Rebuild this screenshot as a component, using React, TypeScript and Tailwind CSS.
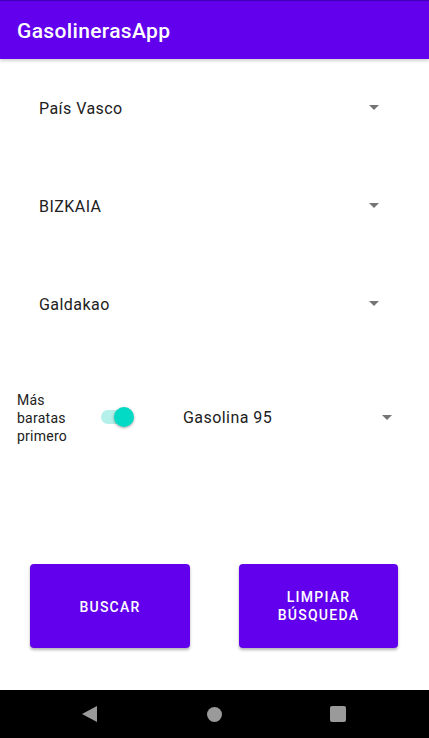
const Arrow = () => (
  <svg width="10" height="5" viewBox="0 0 10 5" className="shrink-0">
    <path d="M0 0 L10 0 L5 5 Z" fill="#757575" />
  </svg>
);

const Spinner = ({ label }: { label: string }) => (
  <div className="h-12 flex items-center justify-between pl-[39px] pr-[50px]">
    <span className="text-[16px] tracking-[0.45px] text-[#212121] pt-[3px]">{label}</span>
    <Arrow />
  </div>
);

export default function App() {
  return (
    <div className="h-screen flex flex-col bg-white font-['Roboto',sans-serif]">
      {/* app bar */}
      <div className="h-[59px] shrink-0 flex items-center pl-[17px] bg-[#6200ee] border-t border-[#3f00b5] shadow-[0_2px_3px_rgba(0,0,0,0.18)]">
        <h1 className="text-[21px] font-medium tracking-[0.35px] text-white leading-none pt-[2px]">GasolinerasApp</h1>
      </div>

      <div className="flex flex-col flex-1">
        <div className="mt-[24px] flex flex-col gap-[50px]">
          <Spinner label="País Vasco" />
          <Spinner label="BIZKAIA" />
          <Spinner label="Galdakao" />
        </div>

        {/* switch + fuel */}
        <div className="mt-[63px] h-[54px] flex items-center pl-[17px] pr-[37px]">
          <span className="w-[60px] text-[14px] leading-[18px] tracking-[0.25px] text-[#212121] pt-[2px]">Más baratas primero</span>
          <div className="relative ml-[24px] w-[34px] h-5 flex items-center">
            <div className="w-[26px] h-[14px] rounded-full bg-[#b5f1ea]" />
            <div className="absolute left-[13px] w-5 h-5 rounded-full bg-[#03dac5] shadow-[0_1px_3px_rgba(0,0,0,0.35)]" />
          </div>
          <div className="flex-1 flex items-center justify-between ml-[48px]">
            <span className="text-[16px] tracking-[0.45px] text-[#212121] pt-[1px]">Gasolina 95</span>
            <Arrow />
          </div>
        </div>

        {/* buttons */}
        <div className="mt-[120px] flex justify-between pl-[30px] pr-[31px]">
          <button className="w-[160px] h-[84px] rounded bg-[#6200ee] text-white text-[14px] font-medium tracking-[1.25px] pt-[2px] shadow-[0_2px_3px_rgba(0,0,0,0.3)]">
            BUSCAR
          </button>
          <button className="w-[159px] h-[84px] rounded bg-[#6200ee] text-white text-[14px] font-medium tracking-[1.25px] leading-[18px] shadow-[0_2px_3px_rgba(0,0,0,0.3)]">
            LIMPIAR
            <br />
            BÚSQUEDA
          </button>
        </div>
      </div>

      {/* nav bar */}
      <div className="h-12 shrink-0 bg-black flex items-center pl-[82px]">
        <svg width="15" height="16" viewBox="0 0 15 16">
          <path d="M15 0 L15 16 L0 8 Z" fill="#9a9a9a" />
        </svg>
        <div className="ml-[110px] w-[15px] h-[15px] rounded-full bg-[#9a9a9a]" />
        <div className="ml-[108px] w-[16px] h-[16px] rounded-[2px] bg-[#9a9a9a]" />
      </div>
    </div>
  );
}
